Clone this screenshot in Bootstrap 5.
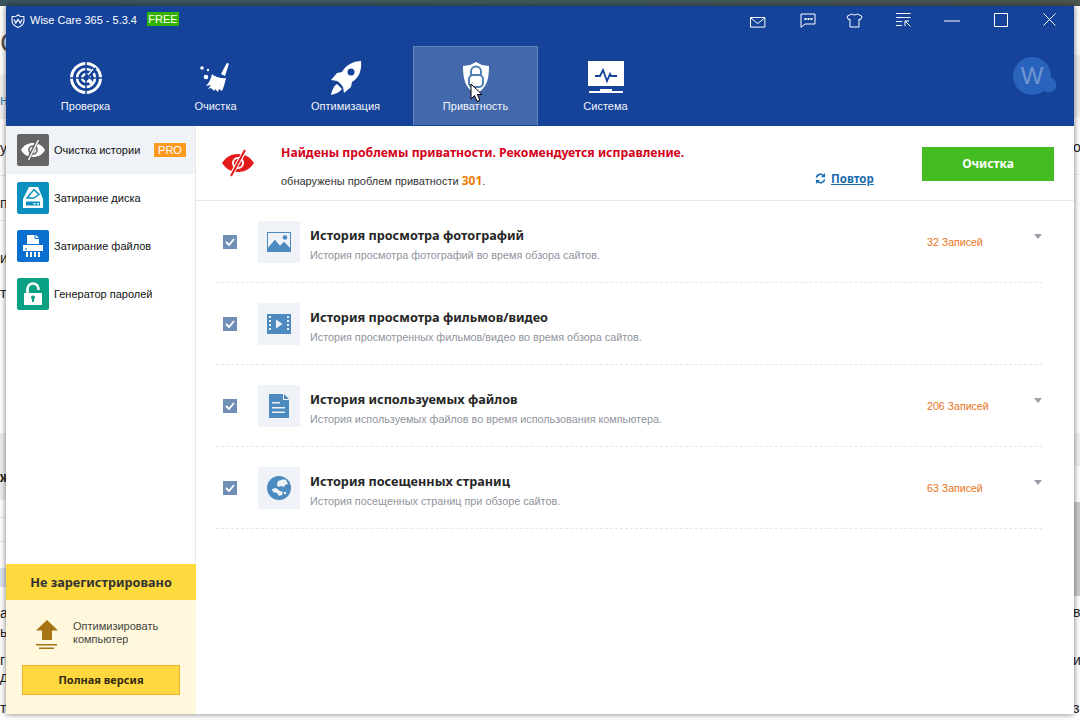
<!DOCTYPE html>
<html lang="ru">
<head>
<meta charset="utf-8">
<title>Wise Care 365</title>
<link href="https://cdn.jsdelivr.net/npm/bootstrap@5.3.0/dist/css/bootstrap.min.css" rel="stylesheet">
<style>
html,body{height:720px;overflow:hidden;background:#fff;}
body{font-family:"Liberation Sans",sans-serif;font-size:11px;color:#222;}
.desk{position:relative;width:1080px;height:720px;overflow:hidden;background:#fff;}
.desk-top{height:6px;background:linear-gradient(90deg,#3c5560,#3f5a5e 50%,#4d5650);}
.strip{width:14px;height:714px;font-size:14px;line-height:16px;color:#222;overflow:hidden;display:grid;}
.strip-l{grid-template-rows:22px 30px 34px 16px 32px 16px 39px 16px 39px 16px 19px 16px 168px 16px 120px 16px 3px 16px 12px 16px 1px 16px 15px 16px;background:linear-gradient(#fff 69px,#f3f3f3 69px,#f3f3f3 112px,#dcdcdc 112px,#fff 113px,#fff 169px,#ddd 169px,#fff 170px,#fff 214px,#ddd 214px,#fff 215px,#fff 427px,#eee 427px,#eee 494px,#fff 494px,#fff 511px,#ccc 511px,#fff 512px,#fff 535px,#ccc 535px,#fff 536px,#fff 562px,#dde3ee 562px,#dde3ee 581px,#fff 581px);}
.strip-r{grid-template-rows:133px 16px 449px 16px 32px 16px 32px 16px;padding-left:7px;background:linear-gradient(#fff 49px,#f1f1f1 49px,#f1f1f1 111px,#fff 111px,#fff 168px,#ddd 168px,#fff 169px,#fff 427px,#f2f2f2 427px,#f2f2f2 460px,#fff 460px,#fff 496px,#ccc 496px,#ccc 590px,#fff 590px);}
.frag-b{font-weight:700;}
.frag-c{color:#3d86b5;}
.frag-big{font-size:28px;line-height:30px;color:#555;}
.win{position:absolute;left:6px;top:6px;width:1068px;height:708px;background:#fff;box-shadow:0 0 6px rgba(0,0,0,.55);}
.win-head{height:120px;background:#144399;color:#fff;}
.title-bar{height:40px;padding:1px 0 0 5px;}
.logo-ico{margin-top:7px;}
.app-name{font-size:11px;line-height:18px;margin:4px 0 0 5px;}
.free{background:#33b300;font-size:11px;line-height:14px;width:32px;text-align:center;margin:5px 0 0 10px;}
.ctl-row{margin-left:auto;padding-top:2px;}
.ctl{width:48.7px;display:flex;justify-content:center;}
.ctl-min{margin-top:11px;}
.tabs{padding-left:17px;gap:5px;}
.tab{width:125px;height:79px;display:flex;flex-direction:column;align-items:center;padding-top:14px;border:1px solid transparent;border-bottom:0;font-size:11px;color:#f2f5fb;}
.tab.on{background:#4369ac;border-color:#6786bd;}
.tab svg{height:36px;display:block;}
.tab span{margin-top:2px;line-height:15px;}
.avatar{position:absolute;left:1006px;top:50px;}
.pointer{position:absolute;left:464px;top:77px;}
.body-row{height:588px;}
.side{width:190px;border-right:1px solid #e6e6e6;}
.side-item{height:48px;padding-left:11px;gap:5px;color:#111;}
.side-item.on{background:#eff2f7;}
.ico{width:32px;height:32px;border-radius:2px;flex:none;display:flex;align-items:center;justify-content:center;}
.c-gray{background:#666565;}.c-cyan{background:#0a90be;}.c-blue{background:#0a70cf;}.c-green{background:#0aa184;}
.pro{margin-left:auto;margin-right:9px;background:#ff9a1f;color:#fff;line-height:14px;width:32px;text-align:center;font-size:11px;}
.promo{width:190px;margin-right:-1px;position:relative;}
.promo-head{height:36px;background:#ffda3f;color:#333;font-family:"Noto Sans",sans-serif;font-weight:700;font-size:12.7px;line-height:36px;text-align:center;}
.promo-body{height:114px;background:#fff8dc;padding:20px 16px 0 16px;}
.promo-text{line-height:13px;color:#444;margin-left:15px;}
.promo-ico{margin-left:14px;flex:none;}
.buy{display:block;width:158px;height:30px;margin-top:16px;background:#ffd83f;border:1px solid #eeb12c;border-radius:0;font-family:"Noto Sans",sans-serif;font-weight:700;font-size:11px;color:#332a10;padding:0;}
.main{flex:1;min-width:0;}
.issue{height:75px;border-bottom:1px solid #e3e8f0;position:relative;padding:0 20px 0 26px;}
.issue-ico{flex:none;margin-top:-1px;}
.issue-text{margin-left:27px;}
.issue-title{color:#d4001a;font-family:"Noto Sans",sans-serif;font-weight:700;font-size:12.2px;line-height:16px;margin-top:19px;}
.issue-sub{line-height:14px;margin-top:13px;color:#333;}
.issue-sub b{color:#ef7b00;font-family:"Noto Sans",sans-serif;font-size:12px;}
.retry{position:absolute;left:619px;top:44px;color:#1a6cb0;font-family:"Noto Sans",sans-serif;font-weight:700;font-size:11.5px;text-decoration:underline;gap:5px;}
.clean{margin-left:auto;width:132px;height:34px;background:#43bd20;color:#fff;border:0;border-radius:0;font-family:"Noto Sans",sans-serif;font-weight:700;font-size:12px;padding:0;margin-top:2px;}
.clean:hover{background:#43bd20;color:#fff;}
.rows{margin:0 32px 0 20px;}
.item{height:82px;border-bottom:1px dashed #e3e6ea;padding-left:7px;}
.chk{width:14px;height:14px;background:#6f8fb5;flex:none;display:flex;align-items:center;justify-content:center;}
.tile{width:42px;height:42px;background:#eff2f7;margin-left:21px;flex:none;display:flex;align-items:center;justify-content:center;}
.txt{margin-left:10px;flex:1;}
.txt-t{font-family:"Noto Sans",sans-serif;font-weight:700;font-size:12.7px;line-height:16px;color:#262626;margin-top:6px;}
.txt-s{font-size:10.8px;line-height:14px;color:#8f939c;margin-top:5px;}
.cnt{width:107px;font-size:10.6px;color:#e8731a;margin-top:2px;}
.caret-dn{width:0;height:0;border:4.5px solid transparent;border-top:5px solid #9a9ea6;border-bottom:0;margin-bottom:10px;}
</style>
</head>
<body>
<div class="desk">
  <div class="desk-top"></div>
  <div class="d-flex justify-content-between">
    <div class="strip strip-l">
      <div></div><div class="frag-big">С</div><div></div><div class="frag-c">нт</div><div></div><div>у</div><div></div><div>п</div><div></div><div>ие</div><div></div><div>те</div><div></div><div class="frag-b">ж</div><div></div><div>аг</div><div></div><div>ь</div><div></div><div>г</div><div></div><div>д</div><div></div><div>т</div>
    </div>
    <div class="strip strip-r">
      <div></div><div>о</div><div></div><div>в</div><div></div><div>и</div><div></div><div>з</div>
    </div>
  </div>

  <div class="win d-flex flex-column">
    <header class="win-head position-relative">
      <div class="title-bar d-flex align-items-start">
        <svg class="logo-ico" width="14" height="14" viewBox="0 0 14 14"><path d="M7 .8 9 2.2 12.8 2.4 13 6.5C13 10 10 12.3 7 13.4 4 12.3 1 10 1 6.5L1.2 2.4 5 2.2Z" fill="none" stroke="#fff" stroke-width="1.1"/><path d="M3 5.500 4.800 9 7 5.500 9.200 9 11 5.500" fill="none" stroke="#fff" stroke-width="1.2"/></svg>
        <span class="app-name">Wise Care 365 - 5.3.4</span>
        <span class="free">FREE</span>
        <div class="ctl-row d-flex align-items-start">
          <div class="ctl"><svg width="16" height="11" viewBox="0 0 16 11" class="mt-2"><path d="M.5.5h14.400v9.600H.5z M.5.7 7.700 6.600 14.900.7" fill="none" stroke="#fff"/></svg></div>
          <div class="ctl"><svg width="16" height="15" viewBox="0 0 16 15" class="mt-1 ms-1"><path d="M1 1h14v10H5l-4 3.400Z" fill="none" stroke="#fff"/><path d="M4.500 5h2v2h-2zM7.500 5h2v2h-2zM10.500 5h2v2h-2z" fill="#fff"/></svg></div>
          <div class="ctl"><svg width="17" height="15" viewBox="0 0 17 15" class="mt-1"><path d="M5.500 1C7 2.200 10 2.200 11.500 1L16 3.400 14.500 6.800 13 6V14H4V6L2.500 6.800 1 3.400Z" fill="none" stroke="#fff"/></svg></div>
          <div class="ctl"><svg width="15" height="14" viewBox="0 0 15 14" class="mt-1"><path d="M0 .5h14.500M0 4.500h14.500M0 8.500h6M0 12.500h6M9 8v5M9 8h4M9 8l5.500 5.500" fill="none" stroke="#fff"/></svg></div>
          <div class="ctl"><svg width="16" height="2" viewBox="0 0 16 2" class="ctl-min"><path d="M0 1h16" stroke="#fff"/></svg></div>
          <div class="ctl"><svg width="14" height="14" viewBox="0 0 14 14" class="mt-1"><path d="M.5.500h13v13H.5z" fill="none" stroke="#fff"/></svg></div>
          <div class="ctl"><svg width="13" height="13" viewBox="0 0 13 13" class="mt-1"><path d="M.5.500l12 12M12.500.5l-12 12" stroke="#fff"/></svg></div>
        </div>
      </div>
      <nav class="tabs d-flex">
        <div class="tab"><svg width="34" height="36" viewBox="0 0 34 36"><g fill="none" stroke="#fff"><circle cx="17" cy="17" r="14.500" stroke-width="3"/><circle cx="17" cy="17" r="9" stroke-width="2.600"/><circle cx="17" cy="17" r="3.800" stroke-width="2.400"/></g><path d="M17 0v34M0 17h34" stroke="#144399" stroke-width="1.500"/><path d="M17 17 27 7" stroke="#144399" stroke-width="1.800"/><path d="M16 15l8-8 3 3-9 8z" fill="#144399"/><path d="M19 14l5-6" stroke="#fff" stroke-width="1.300"/><circle cx="21.500" cy="21" r="2" fill="#fff"/></svg><span>Проверка</span></div>
        <div class="tab"><svg width="34" height="36" viewBox="0 0 34 36"><path d="M22 13 27.500 2.500c.6-1.200 2.700-.4 2.200 1L26 15Z" fill="#fff"/><path d="M13 13c2 2 8 5 14 4-1 4-2 9-4 13l-3-2-1 3-3-3-1 2-3-3-3 1 3-4-5 1c3-3 5-7 6-12Z" fill="#fff"/><circle cx="3" cy="7" r="1.800" fill="#fff"/><circle cx="9" cy="9" r="1.200" fill="#fff"/><circle cx="7" cy="16" r="2.300" fill="#fff"/></svg><span>Очистка</span></div>
        <div class="tab"><svg width="34" height="36" viewBox="0 0 34 36"><path d="M32 0C24 0 17 4 13 11l-5 1-6 7 6 1c2 1 4 3 6 6l1 6 7-6 1-5c7-4 10-12 9-21Z" fill="#fff"/><circle cx="22" cy="11" r="3.500" fill="#144399"/><path d="M8 23c-2 1-5 5-6 11 5-1 9-3 11-6Z" fill="#fff"/></svg><span>Оптимизация</span></div>
        <div class="tab on"><svg width="28" height="36" viewBox="0 0 28 36"><path d="M14 1 20 4 27 5C27 18 25 27 14 33 3 27 1 18 1 5L8 4Z" fill="#fff"/><path d="M9 14V10.500a5 5 0 0 1 10 0V14" fill="none" stroke="#4f7fb4" stroke-width="2"/><rect x="7" y="14" width="14" height="12" rx="4" fill="none" stroke="#4f7fb4" stroke-width="2"/></svg><span>Приватность</span></div>
        <div class="tab"><svg width="36" height="36" viewBox="0 0 36 36"><path d="M0 0h36v25H0z" fill="#fff"/><path d="M12 28h12v2h11v2H1v-2h11z" fill="#fff"/><path d="M7 15h5l3-6 4 11 3-7 1 2h6" fill="none" stroke="#144399" stroke-width="1.800"/></svg><span>Система</span></div>
      </nav>
      <svg class="avatar" width="56" height="42" viewBox="0 0 56 42"><circle cx="20" cy="20" r="19" fill="#2a63bb"/><circle cx="37" cy="29" r="7.500" fill="#2a63bb"/><text x="20" y="28" text-anchor="middle" font-family="Liberation Sans,sans-serif" font-size="24" fill="#6e95d2">W</text></svg>
      <svg class="pointer" width="14" height="20" viewBox="0 0 14 20"><path d="M1 1v15l3.500-3.500L7 18.500l3-1.300-2.600-5.700H12Z" fill="#fff" stroke="#000" stroke-width="1"/></svg>
    </header>

    <div class="body-row d-flex">
      <aside class="side d-flex flex-column">
        <div class="side-item on d-flex align-items-center"><div class="ico c-gray"><svg width="24" height="20" viewBox="0 0 24 20"><path d="M0 10C3 5 7 3 12 3s9 2 12 7c-3 5-7 7-12 7S3 15 0 10Z" fill="#fff"/><circle cx="12" cy="10" r="4" fill="none" stroke="#666565" stroke-width="1.600"/><path d="M17 0 7 20" stroke="#666565" stroke-width="3.500"/><path d="M17.500 0 7.500 20" stroke="#fff" stroke-width="1.400"/></svg></div><span>Очистка истории</span><span class="pro">PRO</span></div>
        <div class="side-item d-flex align-items-center"><div class="ico c-cyan"><svg width="24" height="24" viewBox="0 0 24 24"><path d="M8 1h9l5 12v9H2v-9Z" fill="#fff"/><path d="M8.500 9 13 3.500l5 5-5 3.500H6Z" fill="none" stroke="#0a90be" stroke-width="1.500"/><path d="M5 15.500h14v4H5z" fill="#0a90be"/><path d="M12.500 17h2v1.500h-2zM16 17h2v1.500h-2z" fill="#fff"/></svg></div><span>Затирание диска</span></div>
        <div class="side-item d-flex align-items-center"><div class="ico c-blue"><svg width="22" height="24" viewBox="0 0 22 24"><path d="M5 1h9l3 3v6H5Z" fill="#fff"/><path d="M13 1v3.500h4" fill="none" stroke="#0a70cf"/><path d="M1 11h20v6H1z" fill="#fff"/><path d="M3 14.500h2v1H3z" fill="#0a70cf"/><path d="M4 18h2v5H4zM8 18h2v5H8zM12 18h2v5h-2zM16 18h2v5h-2z" fill="#fff"/></svg></div><span>Затирание файлов</span></div>
        <div class="side-item d-flex align-items-center"><div class="ico c-green"><svg width="22" height="24" viewBox="0 0 22 24"><path d="M5.500 11V7a5.500 5.500 0 0 1 11 0v1" fill="none" stroke="#fff" stroke-width="2.600"/><path d="M2 11h18v12H2z" fill="#fff"/><circle cx="11" cy="15.500" r="2" fill="#0aa184"/><path d="M10 16h2v4h-2z" fill="#0aa184"/></svg></div><span>Генератор паролей</span></div>
        <div class="promo mt-auto">
          <div class="promo-head">Не зарегистрировано</div>
          <div class="promo-body">
            <div class="d-flex align-items-start">
              <svg class="promo-ico" width="22" height="29" viewBox="0 0 22 29"><path d="M11 0 22 10.500H16V20H6V10.500H0Z" fill="#a77414"/><path d="M0 24h21v1.500H0zM3 27.500h15V29H3z" fill="#a77414"/></svg>
              <div class="promo-text">Оптимизировать<br>компьютер</div>
            </div>
            <button class="btn buy" type="button">Полная версия</button>
          </div>
        </div>
      </aside>

      <main class="main">
        <section class="issue d-flex align-items-center">
          <svg class="issue-ico" width="32" height="28" viewBox="0 0 32 28"><path d="M0 14C4 8 9 5 16 5s12 3 16 9c-4 6-9 9-16 9S4 20 0 14Z" fill="#e31b1b"/><circle cx="16" cy="14" r="5" fill="none" stroke="#fff" stroke-width="2"/><path d="M24 0 8 28" stroke="#fff" stroke-width="4"/><path d="M23 1 9 27" stroke="#e31b1b" stroke-width="2"/></svg>
          <div class="issue-text align-self-start">
            <div class="issue-title">Найдены проблемы приватности. Рекомендуется исправление.</div>
            <div class="issue-sub">обнаружены проблем приватности <b>301</b>.</div>
          </div>
          <div class="retry d-flex align-items-center"><svg width="11" height="11" viewBox="0 0 12 12"><path d="M1.500 5A4.600 4.600 0 0 1 9.500 3M10.500 7A4.600 4.600 0 0 1 2.500 9" fill="none" stroke="#1a6cb0" stroke-width="1.800"/><path d="M11 0v4.500H6.500ZM1 12V7.500h4.500Z" fill="#1a6cb0"/></svg><span>Повтор</span></div>
          <button class="btn clean" type="button">Очистка</button>
        </section>
        <section class="rows">
          <div class="item d-flex align-items-center">
            <div class="chk"><svg width="10" height="8" viewBox="0 0 10 8"><path d="M1 4l3 3 5-6" fill="none" stroke="#fff" stroke-width="1.800"/></svg></div>
            <div class="tile"><svg width="24" height="20" viewBox="0 0 24 20"><path d="M0 0h24v20H0z" fill="#4c8abf"/><path d="M1 1h22v15l-6-6-4 4-5-6-7 8Z" fill="#eff2f7"/><path d="M1 16 8 8l5 6 4-4 6 6v1H1Z" fill="#4c8abf"/><circle cx="18" cy="5.500" r="2.300" fill="#4c8abf"/></svg></div>
            <div class="txt"><div class="txt-t">История просмотра фотографий</div><div class="txt-s">История просмотра фотографий во время обзора сайтов.</div></div>
            <div class="cnt">32 Записей</div><div class="caret-dn"></div>
          </div>
          <div class="item d-flex align-items-center">
            <div class="chk"><svg width="10" height="8" viewBox="0 0 10 8"><path d="M1 4l3 3 5-6" fill="none" stroke="#fff" stroke-width="1.800"/></svg></div>
            <div class="tile"><svg width="24" height="20" viewBox="0 0 24 20"><path d="M0 0h24v20H0z" fill="#4c8abf"/><path d="M2 2h2v2H2zM2 6h2v2H2zM2 10h2v2H2zM2 14h2v2H2zM20 2h2v2h-2zM20 6h2v2h-2zM20 10h2v2h-2zM20 14h2v2h-2zM9 5.500l6.500 4.500L9 14.500Z" fill="#eff2f7"/></svg></div>
            <div class="txt"><div class="txt-t">История просмотра фильмов/видео</div><div class="txt-s">История просмотренных фильмов/видео во время обзора сайтов.</div></div>
            <div class="cnt"></div><div class="caret-dn invisible"></div>
          </div>
          <div class="item d-flex align-items-center">
            <div class="chk"><svg width="10" height="8" viewBox="0 0 10 8"><path d="M1 4l3 3 5-6" fill="none" stroke="#fff" stroke-width="1.800"/></svg></div>
            <div class="tile"><svg width="20" height="24" viewBox="0 0 20 24"><path d="M0 0h14v6h6v18H0z" fill="#4c8abf"/><path d="M15 0l5 5h-5z" fill="#4c8abf"/><path d="M3 8h8v1.500H3zM3 13h13v1.500H3zM3 17.500h13V19H3z" fill="#eff2f7"/></svg></div>
            <div class="txt"><div class="txt-t">История используемых файлов</div><div class="txt-s">История используемых файлов во время использования компьютера.</div></div>
            <div class="cnt">206 Записей</div><div class="caret-dn"></div>
          </div>
          <div class="item d-flex align-items-center">
            <div class="chk"><svg width="10" height="8" viewBox="0 0 10 8"><path d="M1 4l3 3 5-6" fill="none" stroke="#fff" stroke-width="1.800"/></svg></div>
            <div class="tile"><svg width="24" height="24" viewBox="0 0 24 24"><circle cx="12" cy="12" r="12" fill="#4c8abf"/><path d="M11 5c3-1 6-2 8-1l2 4-3 1-1 2-3-1-3 1-1-3ZM5 13l4-1 4 3 3 1-1 3-3 1-2-3-4-1Z" fill="#eff2f7"/><circle cx="18" cy="17" r="1.200" fill="#eff2f7"/></svg></div>
            <div class="txt"><div class="txt-t">История посещенных страниц</div><div class="txt-s">История посещенных страниц при обзоре сайтов.</div></div>
            <div class="cnt">63 Записей</div><div class="caret-dn"></div>
          </div>
        </section>
      </main>
    </div>
  </div>
</div>
<script src="https://cdn.jsdelivr.net/npm/bootstrap@5.3.0/dist/js/bootstrap.bundle.min.js"></script>
</body>
</html>
